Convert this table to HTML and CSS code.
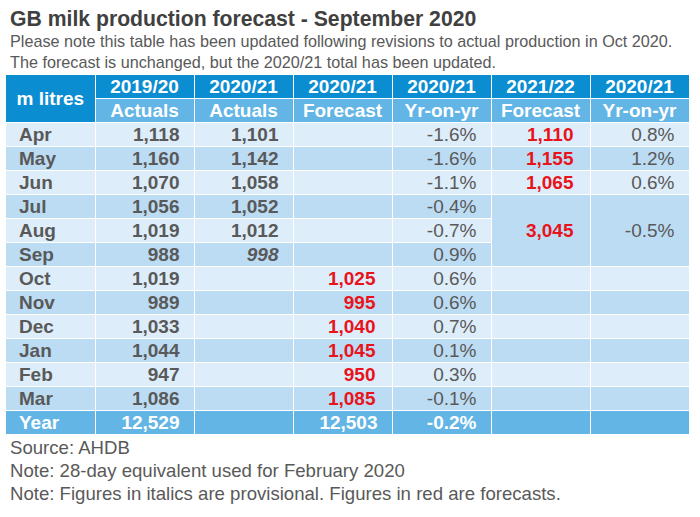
FILE: index.html
```html
<!DOCTYPE html>
<html lang="en">
<head>
<meta charset="utf-8">
<title>GB milk production forecast</title>
<link rel="stylesheet" href="styles.css">
</head>
<body>
<div class="page">
  <h1 class="title">GB milk production forecast - September 2020</h1>
  <p class="sub">Please note this table has been updated following revisions to actual production in Oct 2020.</p>
  <p class="sub">The forecast is unchanged, but the 2020/21 total has been updated.</p>
  <table class="milk">
    <colgroup>
      <col class="c-month"><col class="c-num"><col class="c-num"><col class="c-num"><col class="c-num"><col class="c-num"><col class="c-num">
    </colgroup>
    <thead>
      <tr class="h1">
        <th rowspan="2" class="corner">m litres</th>
        <th>2019/20</th><th>2020/21</th><th>2020/21</th><th>2020/21</th><th>2021/22</th><th>2020/21</th>
      </tr>
      <tr class="h2">
        <th>Actuals</th><th>Actuals</th><th>Forecast</th><th>Yr-on-yr</th><th>Forecast</th><th>Yr-on-yr</th>
      </tr>
    </thead>
    <tbody>
      <tr class="lt"><td class="m">Apr</td><td class="n">1,118</td><td class="n">1,101</td><td></td><td class="p">-1.6%</td><td class="n red">1,110</td><td class="p">0.8%</td></tr>
      <tr class="dk"><td class="m">May</td><td class="n">1,160</td><td class="n">1,142</td><td></td><td class="p">-1.6%</td><td class="n red">1,155</td><td class="p">1.2%</td></tr>
      <tr class="lt"><td class="m">Jun</td><td class="n">1,070</td><td class="n">1,058</td><td></td><td class="p">-1.1%</td><td class="n red">1,065</td><td class="p">0.6%</td></tr>
      <tr class="dk"><td class="m">Jul</td><td class="n">1,056</td><td class="n">1,052</td><td></td><td class="p">-0.4%</td><td rowspan="3" class="n red merged">3,045</td><td rowspan="3" class="p merged">-0.5%</td></tr>
      <tr class="lt"><td class="m">Aug</td><td class="n">1,019</td><td class="n">1,012</td><td></td><td class="p">-0.7%</td></tr>
      <tr class="dk"><td class="m">Sep</td><td class="n">988</td><td class="n it">998</td><td></td><td class="p">0.9%</td></tr>
      <tr class="lt"><td class="m">Oct</td><td class="n">1,019</td><td></td><td class="n red">1,025</td><td class="p">0.6%</td><td></td><td></td></tr>
      <tr class="dk"><td class="m">Nov</td><td class="n">989</td><td></td><td class="n red">995</td><td class="p">0.6%</td><td></td><td></td></tr>
      <tr class="lt"><td class="m">Dec</td><td class="n">1,033</td><td></td><td class="n red">1,040</td><td class="p">0.7%</td><td></td><td></td></tr>
      <tr class="dk"><td class="m">Jan</td><td class="n">1,044</td><td></td><td class="n red">1,045</td><td class="p">0.1%</td><td></td><td></td></tr>
      <tr class="lt"><td class="m">Feb</td><td class="n">947</td><td></td><td class="n red">950</td><td class="p">0.3%</td><td></td><td></td></tr>
      <tr class="dk"><td class="m">Mar</td><td class="n">1,086</td><td></td><td class="n red">1,085</td><td class="p">-0.1%</td><td></td><td></td></tr>
      <tr class="yr"><td class="m">Year</td><td class="n">12,529</td><td></td><td class="n">12,503</td><td class="n">-0.2%</td><td></td><td></td></tr>
    </tbody>
  </table>
  <p class="note first">Source: AHDB</p>
  <p class="note">Note: 28-day equivalent used for February 2020</p>
  <p class="note">Note: Figures in italics are provisional. Figures in red are forecasts.</p>
</div>
</body>
</html>
```

FILE: styles.css
```css
html, body {
  margin: 0;
  padding: 0;
  background: #ffffff;
}
body {
  font-family: "Liberation Sans", Arial, sans-serif;
  color: #595959;
}
.page {
  padding: 7px 0 0 6px;
}
.title {
  margin: 0 0 0 4px;
  font-size: 21.2px;
  line-height: 24px;
  font-weight: bold;
  color: #404040;
}
.sub {
  margin: 0 0 0 4px;
  font-size: 16.2px;
  line-height: 21px;
  color: #595959;
  white-space: nowrap;
}
.milk {
  margin-top: 2px;
  border-collapse: collapse;
  table-layout: fixed;
  width: 683px;
  font-size: 19px;
}
.c-month { width: 89px; }
.c-num { width: 99px; }
.milk th, .milk td {
  border: 1px solid #ffffff;
  padding: 0 14px 0 13px;
  height: 23px;
  line-height: 22px;
  white-space: nowrap;
  overflow: hidden;
}
.milk tr:first-child th { border-top: none; }
.milk th:first-child, .milk td:first-child { border-left: none; }
.milk th {
  color: #ffffff;
  font-weight: bold;
  text-align: center;
  padding: 0;
}
.h1 th { background: #0b8dd2; }
.h2 th { background: #62b5e5; }
.corner { background: #0b8dd2; }
.lt td { background: #ddedfa; }
.dk td { background: #bcdcf4; }
.yr td {
  background: #62b5e5;
  color: #ffffff;
  font-weight: bold;
}
.milk td.merged { background: #bcdcf4; }
.m {
  text-align: left;
  font-weight: bold;
}
.n {
  text-align: right;
  font-weight: bold;
}
.p {
  text-align: right;
  font-weight: normal;
}
.red { color: #e8141b; }
.n.red { padding-right: 16px; }
.it { font-style: italic; }
.note {
  margin: 0 0 0 4px;
  font-size: 18.6px;
  line-height: 23px;
  color: #595959;
  white-space: nowrap;
}
.note.first { margin-top: 1px; }
```
